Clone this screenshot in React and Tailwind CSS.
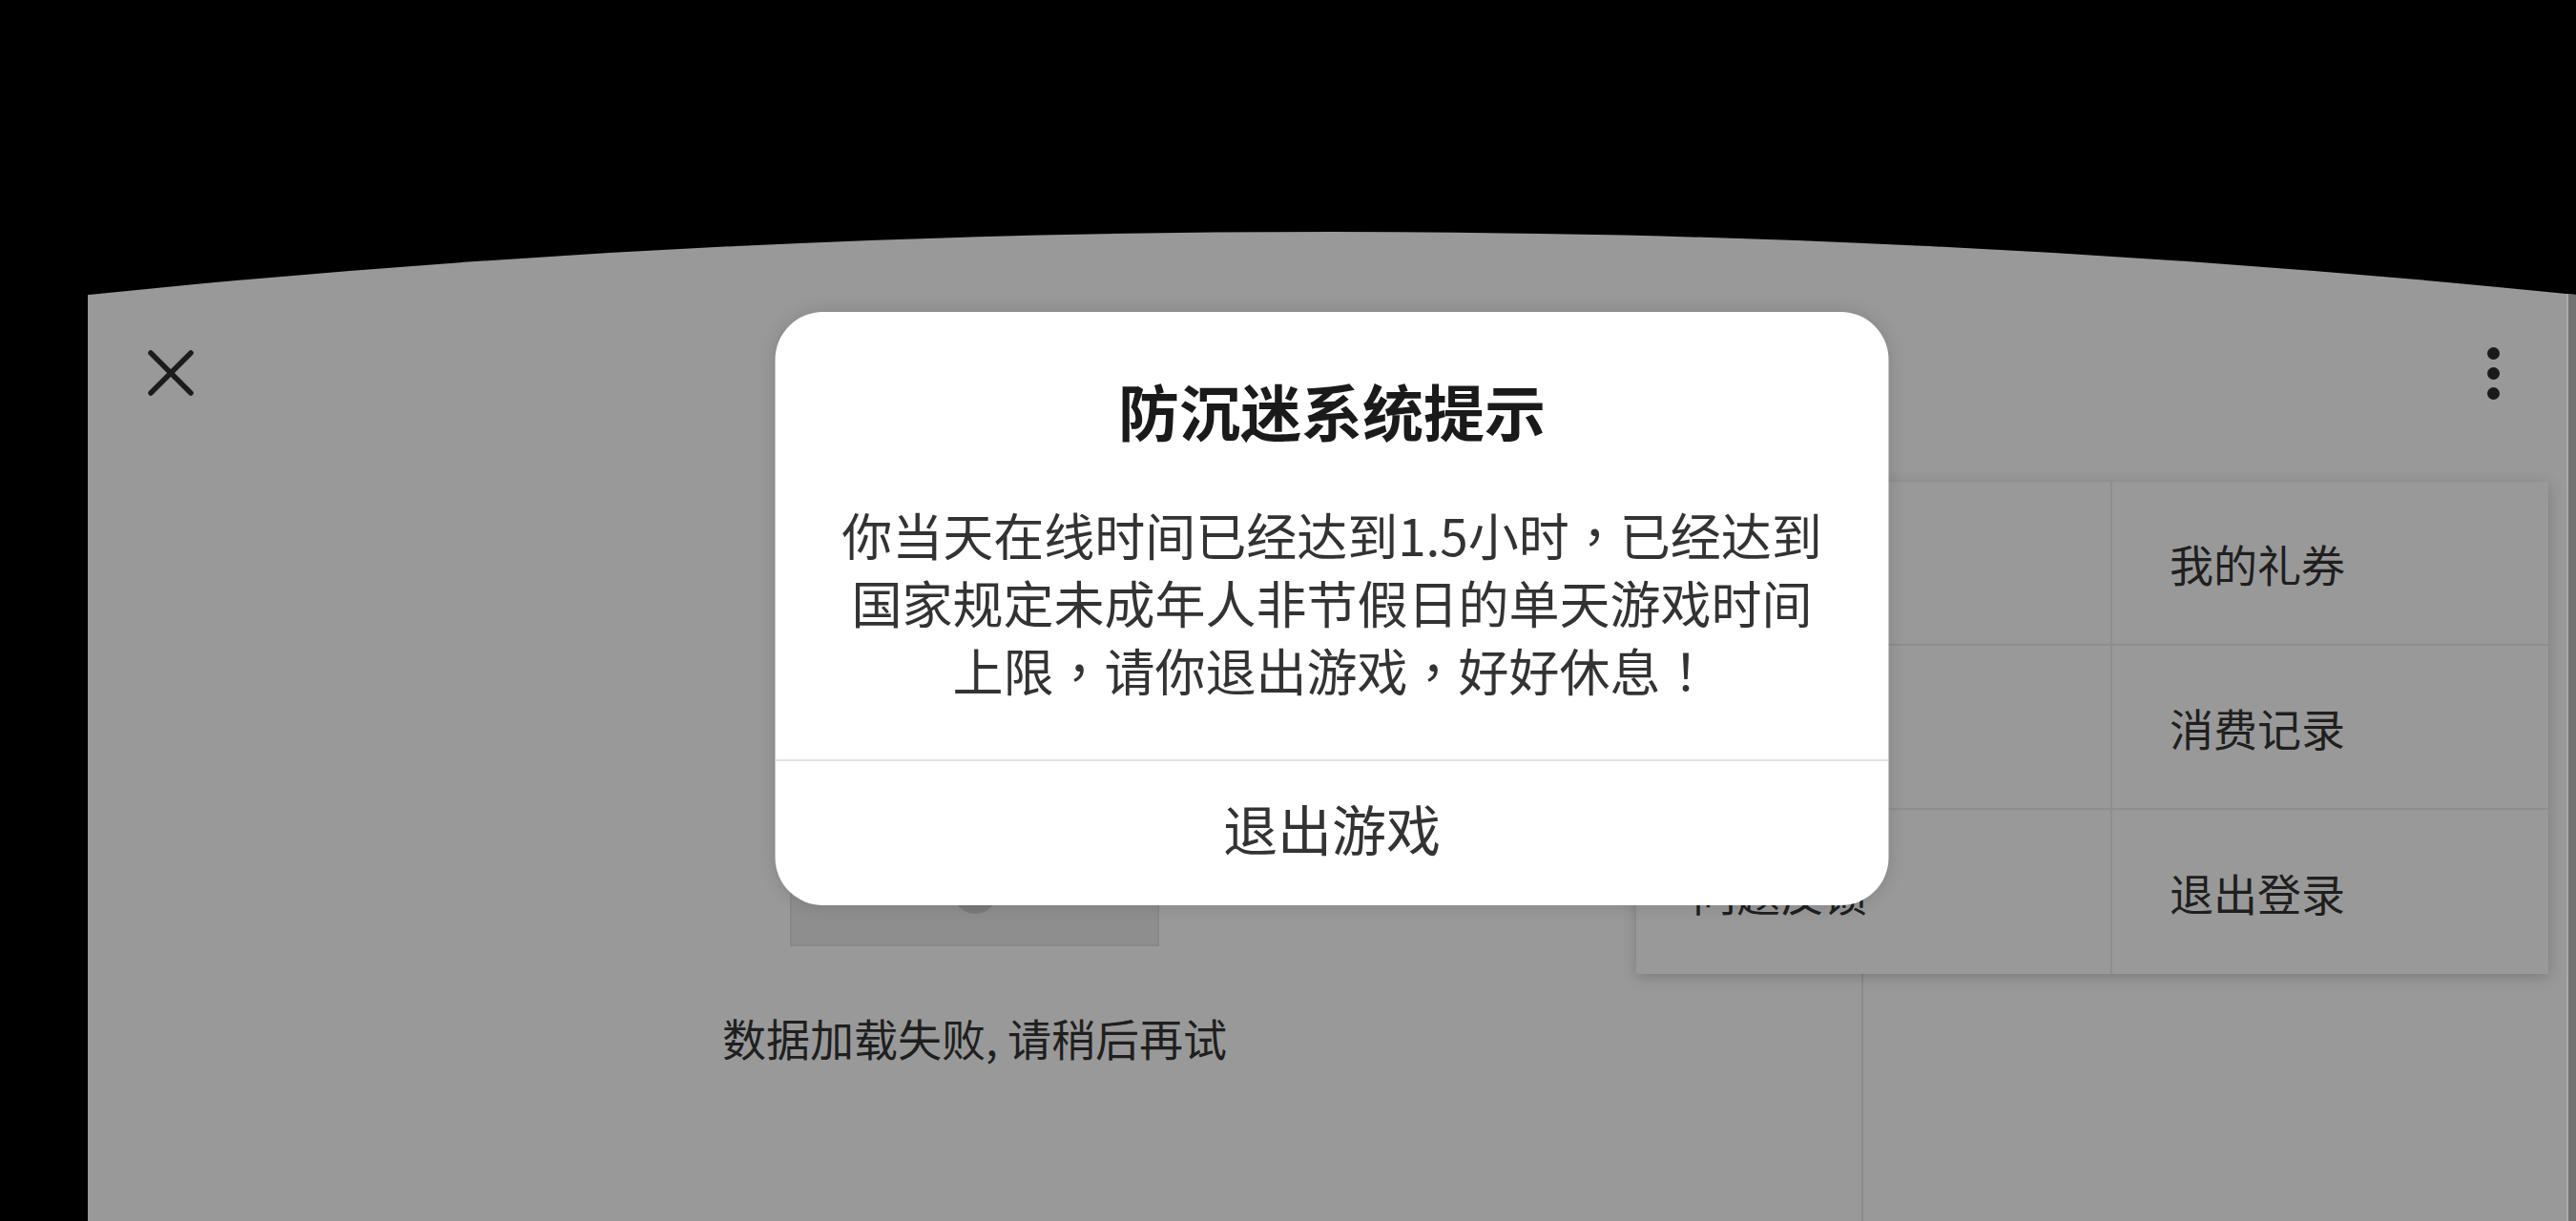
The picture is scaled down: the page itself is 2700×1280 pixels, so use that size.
import React from "react";

const menuItems = [
  ["", "我的礼券"],
  ["", "消费记录"],
  ["问题反馈", "退出登录"],
];

// Full-width punctuation set centred in its cell
function Punct({ children }) {
  return <span className="font-['Noto_Sans_CJK_TC',sans-serif]">{children}</span>;
}

function CloseIcon() {
  return (
    <svg width="50" height="48" viewBox="0 0 50 48" fill="none">
      <path
        d="M4 3 L46 45 M46 3 L4 45"
        stroke="#1c1c1c"
        strokeWidth="5.5"
        strokeLinecap="round"
      />
    </svg>
  );
}

function MoreDots() {
  return (
    <div className="flex flex-col items-center gap-[8px]">
      <span className="block w-[13px] h-[13px] rounded-full bg-[#1a1a1a]" />
      <span className="block w-[13px] h-[13px] rounded-full bg-[#1a1a1a]" />
      <span className="block w-[13px] h-[13px] rounded-full bg-[#1a1a1a]" />
    </div>
  );
}

function Menu() {
  return (
    <div className="absolute right-[29px] top-[262px] w-[956px] bg-[#999999] shadow-[0_3px_14px_rgba(0,0,0,0.2)] grid grid-cols-[499px_457px]">
      {menuItems.map((row, r) =>
        row.map((label, c) => (
          <div
            key={`${r}-${c}`}
            className={`h-[172px] flex items-center text-[46px] text-[#1f1f1f] ${
              c === 0 ? "pl-[59px] border-r-2 border-[#8e8e8e]" : "pl-[60px]"
            } ${r < 2 ? "border-b-2 border-[#8e8e8e]" : ""}`}
          >
            {label}
          </div>
        ))
      )}
    </div>
  );
}

function AntiAddictionDialog() {
  return (
    <div className="absolute left-1/2 -translate-x-1/2 top-[84px] w-[1167px] h-[622px] bg-white rounded-[50px] shadow-[0_0_18px_rgba(0,0,0,0.14)] flex flex-col overflow-hidden">
      <div className="pt-[65px] text-center text-[64px] leading-[74px] font-bold text-[#1a1a1a]">
        防沉迷系统提示
      </div>
      <p className="mt-[59px] px-[60px] pb-[58px] text-center text-[53px] leading-[71px] text-[#333333]">
        你当天在线时间已经达到1.5小时<Punct>，</Punct>已经达到国家规定未成年人非节假日的单天游戏时间上限<Punct>，</Punct>请你退出游戏<Punct>，</Punct>好好休息<Punct>！</Punct>
      </p>
      <div className="flex-1 border-t-2 border-[#e2e2e2] flex items-center justify-center pb-[12px] text-[57px] text-[#333333]">
        退出游戏
      </div>
    </div>
  );
}

export default function App() {
  return (
    <div className="w-[2700px] h-[1280px] bg-black overflow-hidden flex pl-[92px] pt-[243px] font-['Noto_Sans_CJK_SC',sans-serif]">
      <div className="relative flex-1 flex bg-[#999999] [clip-path:ellipse(6251px_3000px_at_50%_3000px)]">
        {/* page under the dim layer */}
        <div className="flex-1 flex flex-col">
          <header className="h-[296px] flex items-center justify-between pl-[62px] pr-[70px]">
            <CloseIcon />
            <MoreDots />
          </header>
          <div className="flex-1 flex">
            <section className="w-[1859px] flex flex-col items-center pt-[153px]">
              <div className="w-[387px] h-[300px] bg-[#8e8e8e] border-2 border-[#888888] flex flex-col items-center pt-[218px]">
                <div className="w-[46px] h-[46px] rounded-full bg-[#7b7b7b]" />
              </div>
              <div className="mt-[63px] text-[46px] leading-[64px] text-[#1f1f1f]">
                数据加载失败, 请稍后再试
              </div>
            </section>
            <aside className="flex-1 border-l-2 border-[#8a8a8a]" />
          </div>
        </div>
        <div className="w-[2px] bg-[#a9a9a9]" />
        <div className="w-[8px] bg-[#737373]" />

        <Menu />
        <AntiAddictionDialog />
      </div>
    </div>
  );
}
